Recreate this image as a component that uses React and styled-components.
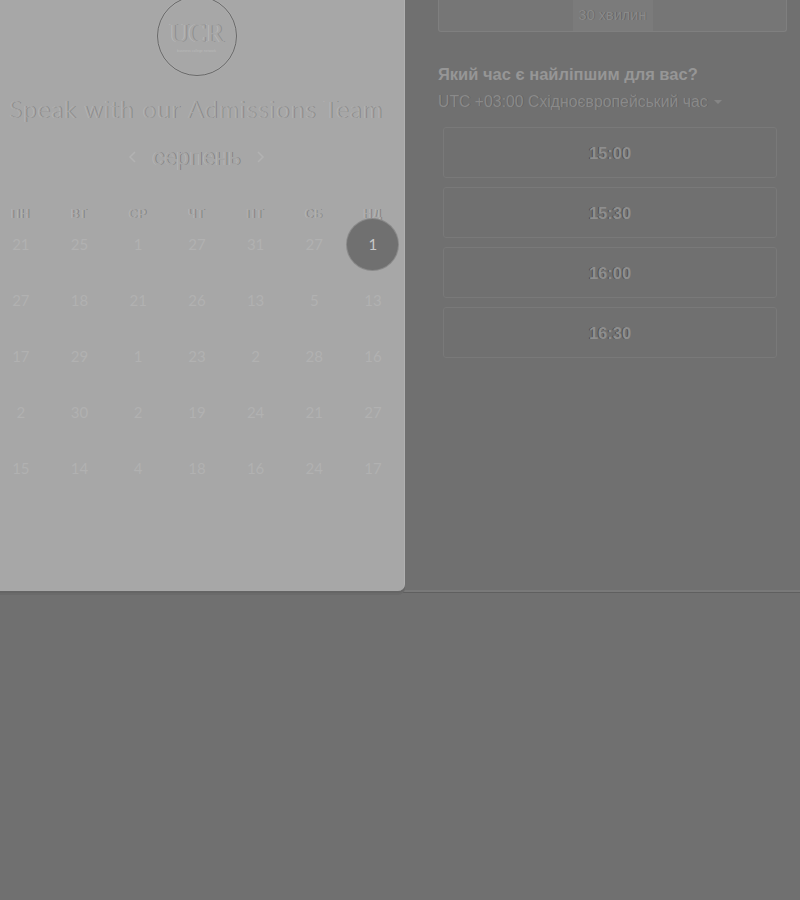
import styled, { createGlobalStyle } from "styled-components";

const GlobalStyle = createGlobalStyle`
  html, body {
    margin: 0;
    background: #707070;
    font-family: "Liberation Sans", Arial, sans-serif;
  }
`;

const Page = styled.div`
  width: 800px;
  height: 900px;
  overflow: hidden;
  background: #707070;
`;

const Widget = styled.div`
  display: flex;
  height: 590px;
  border-bottom: 2px solid #797979;
  box-shadow: 0 1px 0 #5f5f5f;
`;

const LeftPanel = styled.section`
  width: 405px;
  height: 591px;
  box-sizing: border-box;
  padding-right: 11px;
  background: #a7a7a7;
  border-right: 1px solid #b0b0b0;
  border-bottom-right-radius: 7px;
  box-shadow: 0 2px 0 #656565, 0 4px 0 #6a6a6a;
  display: flex;
  flex-direction: column;
  align-items: center;
`;

const Logo = styled.div`
  width: 80px;
  height: 80px;
  box-sizing: border-box;
  margin-top: -4px;
  padding-bottom: 2px;
  border: 1px solid #686868;
  border-radius: 50%;
  box-shadow: 0 0 1px #c0c0c0, inset 0 0 1px #c0c0c0;
  display: flex;
  flex-direction: column;
  align-items: center;
  justify-content: center;
`;

const LogoMark = styled.span`
  font-family: "Liberation Serif", serif;
  font-size: 27px;
  line-height: 31px;
  letter-spacing: -0.5px;
  color: #a7a7a7;
  text-shadow: 1px 0 0 #8e8e8e, -1px 0 0 #b8b8b8;
`;

const LogoCaption = styled.span`
  font-size: 3.5px;
  line-height: 4px;
  color: #bababa;
  white-space: nowrap;
`;

const Title = styled.h1`
  margin: 19px 0 0;
  font-family: Lato, sans-serif;
  font-weight: 300;
  font-size: 24px;
  line-height: 28px;
  letter-spacing: 1.3px;
  white-space: nowrap;
  color: #a7a7a7;
  text-shadow: 0.7px 0 0 #818181, -0.7px 0 0 #b8b8b8;
`;

const MonthRow = styled.div`
  margin-top: 21px;
  display: flex;
  align-items: center;
  gap: 14px;
  height: 26px;
`;

const Month = styled.span`
  font-family: Roboto, sans-serif;
  font-size: 23px;
  color: #a7a7a7;
  text-shadow: 0.7px 0 0 #7d7d7d, -0.7px 0 0 #b8b8b8;
`;

const Chevron = styled.svg`
  width: 10px;
  height: 14px;
  fill: none;
  stroke: #b2b2b2;
  stroke-width: 1.5;
`;

const WeekRow = styled.div`
  width: 411px;
  margin-top: 34px;
  margin-left: 1px;
  display: grid;
  grid-template-columns: repeat(7, 58.7px);
  justify-items: center;
`;

const WeekDay = styled.span`
  font-size: 12px;
  line-height: 20px;
  letter-spacing: 1px;
  color: #a7a7a7;
  text-shadow: 0.7px 0 0 #7b7b7b, -0.7px 0 0 #bababa;
`;

const DayGrid = styled.div`
  width: 411px;
  margin-top: -8px;
  margin-left: 1px;
  display: grid;
  grid-template-columns: repeat(7, 58.7px);
  grid-auto-rows: 56px;
  justify-items: center;
  align-items: center;
`;

const Day = styled.span`
  width: 51px;
  height: 51px;
  border-radius: 50%;
  display: flex;
  align-items: center;
  justify-content: center;
  font-family: Lato, sans-serif;
  font-size: 15px;
  color: ${(props) => (props.$selected ? "#c8c8c8" : "#b1b1b1")};
  background: ${(props) => (props.$selected ? "#707070" : "transparent")};
  box-shadow: ${(props) => (props.$selected ? "0 0 0 1px #8a8a8a" : "none")};
`;

const RightPanel = styled.section`
  flex: 1;
  padding: 0 13px 0 33px;
  display: flex;
  flex-direction: column;
`;

const DurationCard = styled.div`
  height: 32px;
  box-sizing: border-box;
  border: 1px solid #7f7f7f;
  border-top: none;
  border-radius: 0 0 3px 3px;
  background: #767676;
  display: flex;
  justify-content: center;
`;

const Duration = styled.span`
  width: 80px;
  height: 31px;
  background: #7b7b7b;
  font-size: 14.5px;
  line-height: 30px;
  text-align: center;
  white-space: nowrap;
  color: #8a8a8a;
  text-shadow: 0.7px 0 0 #5f5f5f;
`;

const Question = styled.h2`
  margin: 32px 0 0;
  font-size: 16.5px;
  font-weight: 700;
  line-height: 20px;
  color: #969696;
  white-space: nowrap;
`;

const ZoneRow = styled.div`
  margin-top: 8px;
  display: flex;
  align-items: center;
  gap: 6px;
  height: 20px;
  font-size: 15.8px;
  white-space: nowrap;
  color: #8a8a8a;
  text-shadow: 0.7px 0 0 #5f5f5f;
`;

const Caret = styled.span`
  border: 4px solid transparent;
  border-top-color: #858585;
  border-bottom: none;
`;

const Slots = styled.div`
  margin: 15px 10px 0 5px;
  display: flex;
  flex-direction: column;
  gap: 9px;
`;

const Slot = styled.div`
  height: 51px;
  box-sizing: border-box;
  padding-top: 1px;
  border: 1px solid #797979;
  border-radius: 3px;
  display: flex;
  align-items: center;
  justify-content: center;
  font-size: 16.5px;
  font-weight: 700;
  color: #8e8e8e;
  text-shadow: -1px 0 0 #505050;
`;

const weekDays = ["ПН", "ВТ", "СР", "ЧТ", "ПТ", "СБ", "НД"];
const days = [
  21, 25, 1, 27, 31, 27, 1,
  27, 18, 21, 26, 13, 5, 13,
  17, 29, 1, 23, 2, 28, 16,
  2, 30, 2, 19, 24, 21, 27,
  15, 14, 4, 18, 16, 24, 17,
];
const times = ["15:00", "15:30", "16:00", "16:30"];

export default function App() {
  return (
    <Page>
      <GlobalStyle />
      <Widget>
        <LeftPanel>
          <Logo>
            <LogoMark>UCR</LogoMark>
            <LogoCaption>business college network</LogoCaption>
          </Logo>
          <Title>Speak with our Admissions Team</Title>
          <MonthRow>
            <Chevron viewBox="0 0 10 14"><path d="M7 2 2 7l5 5" /></Chevron>
            <Month>серпень</Month>
            <Chevron viewBox="0 0 10 14"><path d="m3 2 5 5-5 5" /></Chevron>
          </MonthRow>
          <WeekRow>
            {weekDays.map((d) => <WeekDay key={d}>{d}</WeekDay>)}
          </WeekRow>
          <DayGrid>
            {days.map((d, i) => (
              <Day key={i} $selected={i === 6}>{d}</Day>
            ))}
          </DayGrid>
        </LeftPanel>
        <RightPanel>
          <DurationCard>
            <Duration>30 хвилин</Duration>
          </DurationCard>
          <Question>Який час є найліпшим для вас?</Question>
          <ZoneRow>UTC +03:00 Східноєвропейський час<Caret /></ZoneRow>
          <Slots>
            {times.map((t) => <Slot key={t}>{t}</Slot>)}
          </Slots>
        </RightPanel>
      </Widget>
    </Page>
  );
}
